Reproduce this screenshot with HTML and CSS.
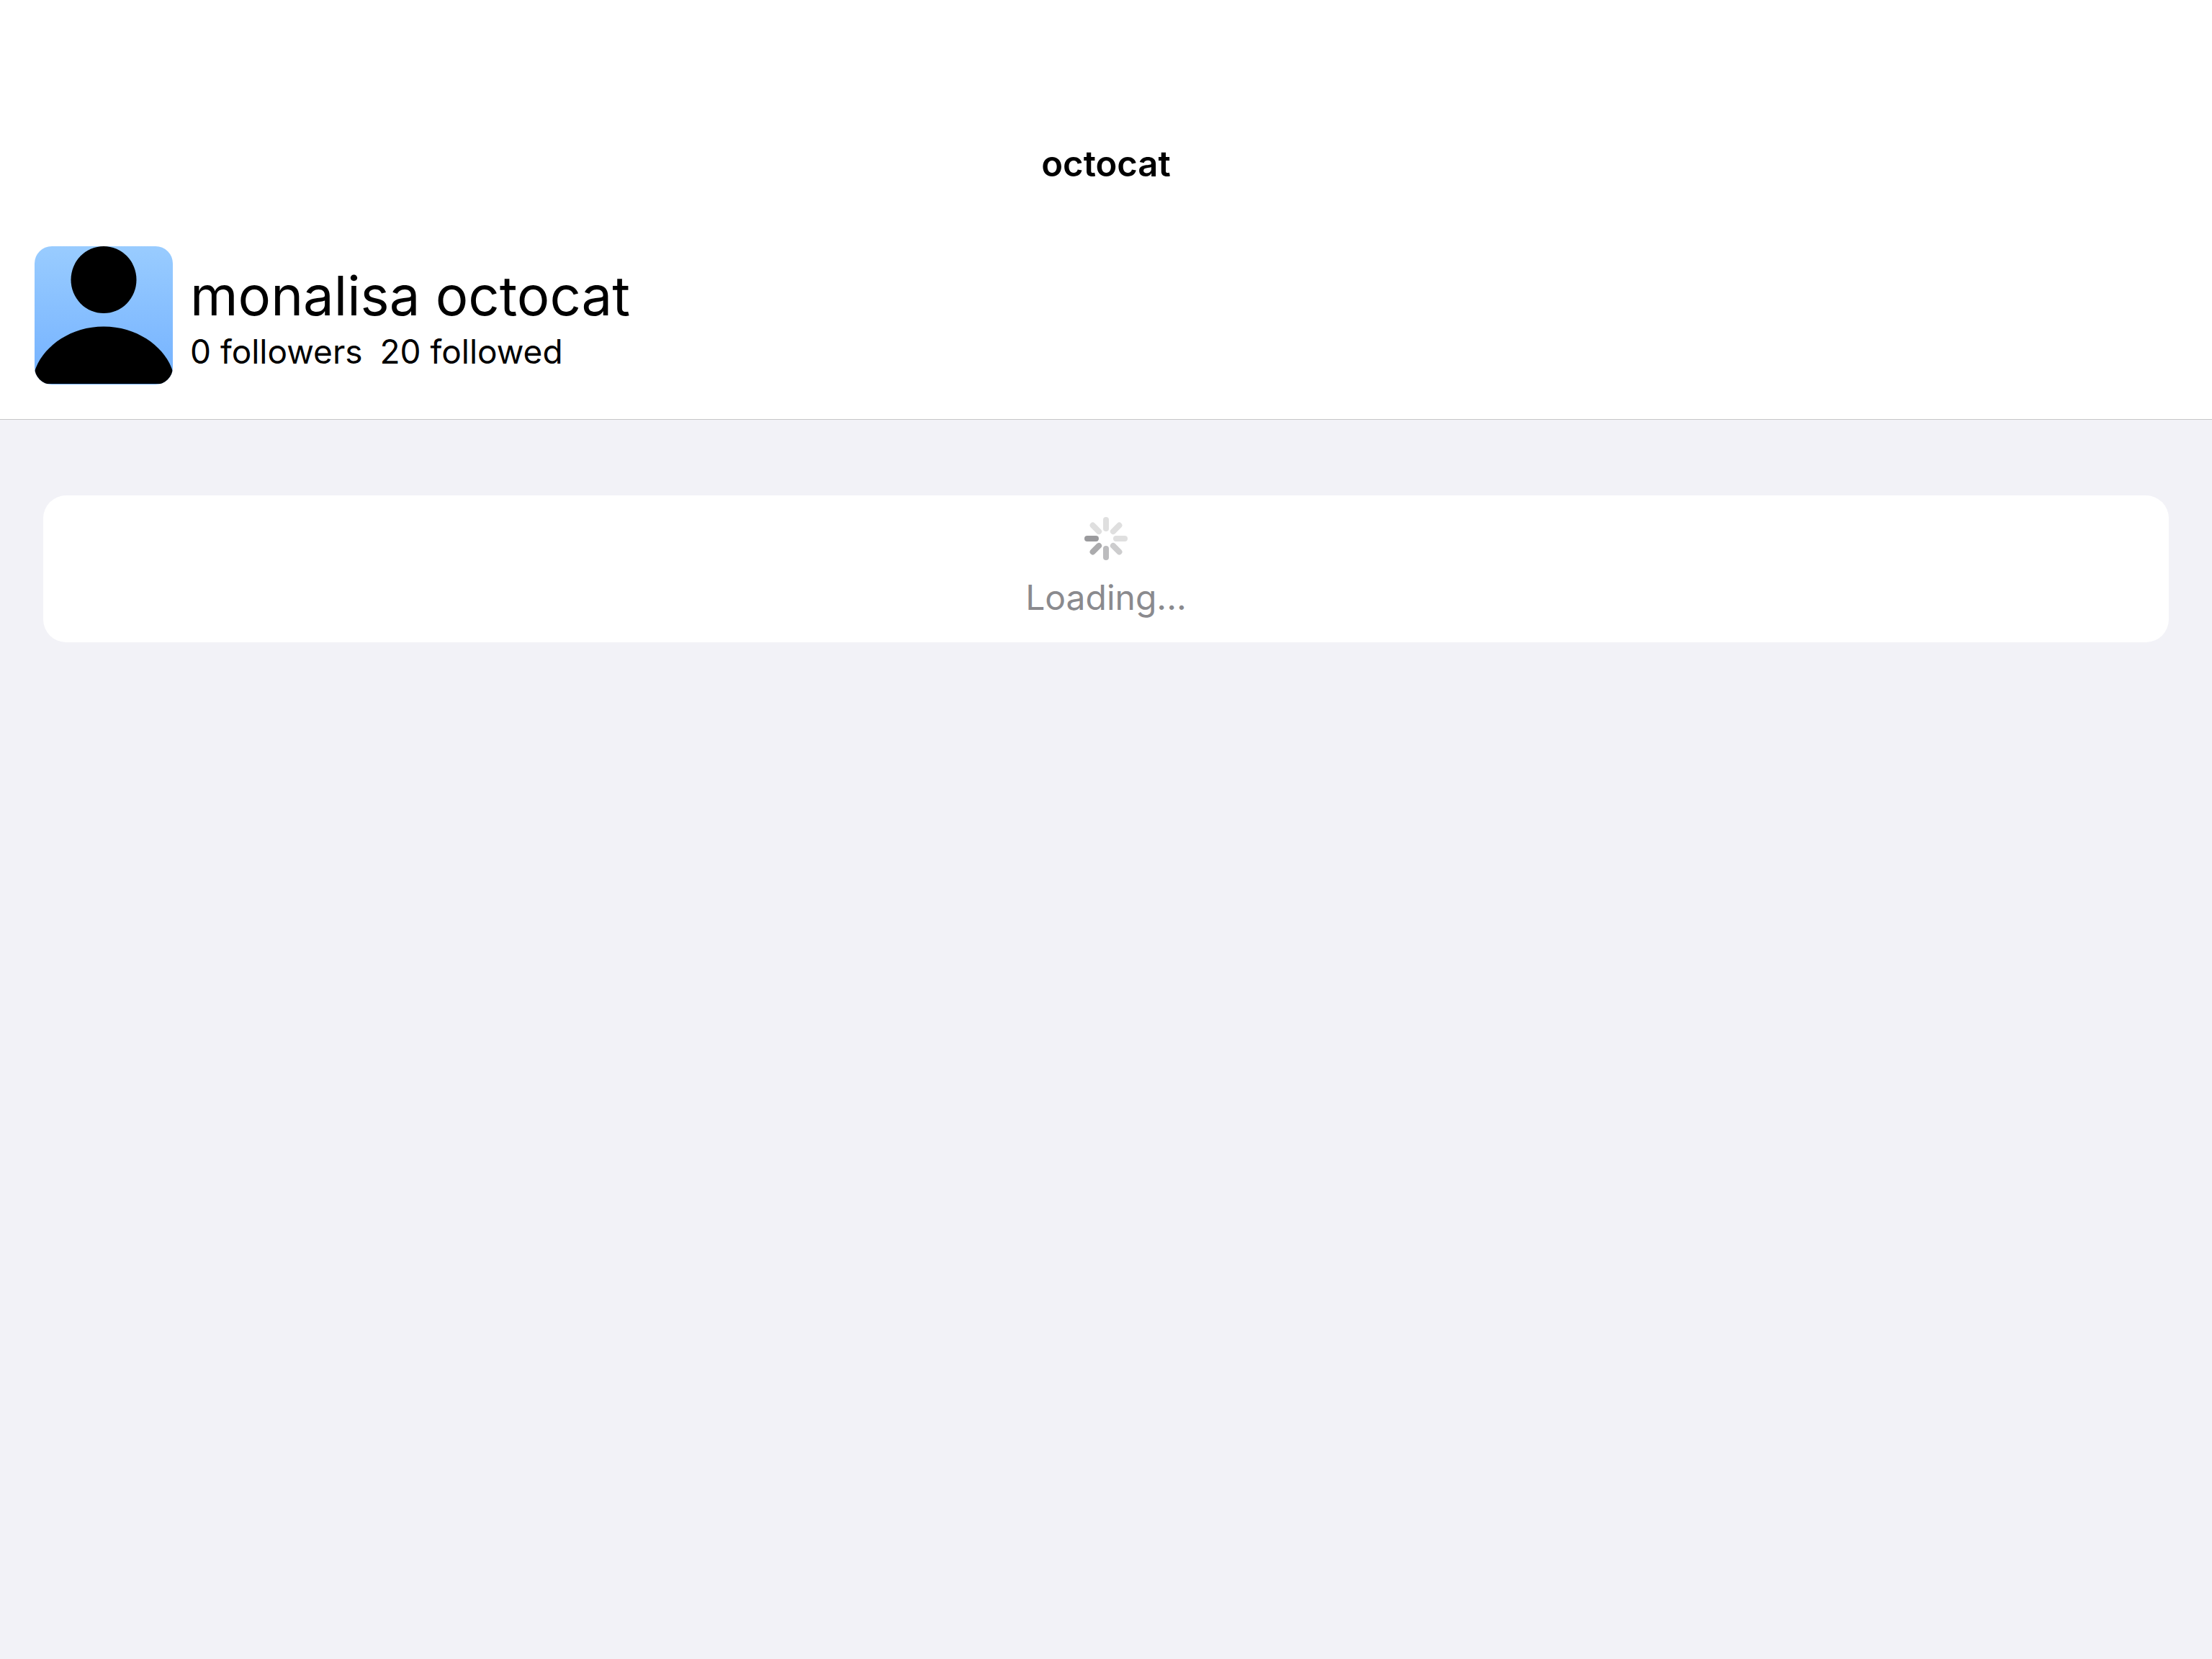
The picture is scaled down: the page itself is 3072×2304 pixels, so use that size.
FILE: index.html
```html
<!DOCTYPE html>
<html lang="en">
<head>
<meta charset="utf-8">
<meta name="viewport" content="width=device-width, initial-scale=1">
<title>octocat</title>
<link rel="stylesheet" href="styles.css">
</head>
<body>
<header class="header">
  <h1 class="nav-title">octocat</h1>
  <section class="profile">
    <svg class="avatar" viewBox="0 0 192 192" role="img" aria-label="Avatar">
      <defs>
        <linearGradient id="sky" x1="0" y1="0" x2="0" y2="1">
          <stop offset="0" stop-color="#99ccff"/>
          <stop offset="1" stop-color="#73b1ff"/>
        </linearGradient>
      </defs>
      <rect width="192" height="192" fill="url(#sky)"/>
      <ellipse cx="96" cy="46.5" rx="45.5" ry="46.5"/>
      <path d="M0 174C10 141 48 111.500 96 111.500S182 141 192 174V191H0Z"/>
    </svg>
    <div class="profile-text">
      <h2 class="name">monalisa octocat</h2>
      <p class="stats"><span>0 followers</span><span>20 followed</span></p>
    </div>
  </section>
</header>
<main class="content">
  <div class="card" role="status">
    <svg class="spinner" viewBox="-30 -30 60 60" aria-hidden="true">
      <g stroke-width="8" stroke-linecap="round">
        <path d="M0-14V-26" stroke="#dfdfdf"/>
        <path d="M0-14V-26" stroke="#dfdfdf" transform="rotate(45)"/>
        <path d="M0-14V-26" stroke="#dfdfdf" transform="rotate(90)"/>
        <path d="M0-14V-26" stroke="#cdcdce" transform="rotate(135)"/>
        <path d="M0-14V-26" stroke="#bcbcbe" transform="rotate(180)"/>
        <path d="M0-14V-26" stroke="#ababad" transform="rotate(225)"/>
        <path d="M0-14V-26" stroke="#9a9a9d" transform="rotate(270)"/>
        <path d="M0-14V-26" stroke="#dfdfdf" transform="rotate(315)"/>
      </g>
    </svg>
    <p class="loading">Loading...</p>
  </div>
</main>
</body>
</html>
```
FILE: styles.css
```css
* {
  box-sizing: border-box;
  margin: 0;
}

body {
  min-height: 100vh;
  background: #f2f2f7;
  color: #000;
  font-family: Inter, "Liberation Sans", sans-serif;
}

.header {
  padding-top: 198px;
  background: #fff;
  border-bottom: 1px solid #c6c6c8;
}

.nav-title {
  font-size: 49px;
  line-height: 60px;
  font-weight: 600;
  text-align: center;
}

.profile {
  display: flex;
  align-items: center;
  gap: 24px;
  padding: 84px 48px 48px;
}

.avatar {
  width: 192px;
  height: 192px;
  border-radius: 24px;
}

.profile-text {
  padding-top: 4px;
}

.name {
  font-size: 76px;
  line-height: 96px;
  font-weight: 400;
}

.stats {
  display: flex;
  gap: 24px;
  font-size: 46px;
  line-height: 60px;
}

.content {
  padding: 105px 60px;
}

.card {
  display: flex;
  flex-direction: column;
  align-items: center;
  gap: 22px;
  padding: 30px 30px 32px;
  border-radius: 32px;
  background: #fff;
}

.spinner {
  width: 60px;
  height: 60px;
}

.loading {
  color: #8a8a8e;
  font-size: 48px;
  line-height: 60px;
}
```
